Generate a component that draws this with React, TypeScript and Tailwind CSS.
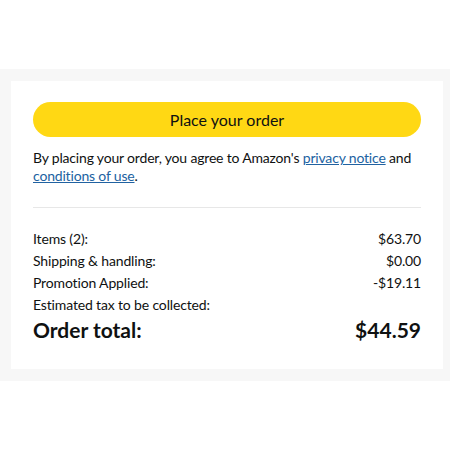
import React from "react";

export default function App() {
  const font = { fontFamily: 'Lato, "Noto Sans", Arial, sans-serif' };
  return (
    <div className="w-[450px] h-[450px] bg-white" style={font}>
      <div className="h-[69px]" />
      <div className="bg-[#f7f7f7] pl-[11px] pr-[7px] py-[12px]">
        <div className="bg-white px-[22px] pt-[21px] pb-[24px] text-[#0f1111]">
          <button className="w-full h-[35px] rounded-full bg-[#ffd814] text-[16px] text-[#0f1111] flex items-center justify-center">
            Place your order
          </button>
          <p className="mt-[12px] text-[14px] leading-[18px] tracking-[-0.18px]">
            By placing your order, you agree to Amazon's{" "}
            <a className="text-[#2162a1] underline">privacy notice</a> and{" "}
            <a className="text-[#2162a1] underline">conditions of use</a>.
          </p>
          <div className="mt-[22px] h-px bg-[#e7e7e7]" />
          <div className="mt-[19px] text-[14px] tracking-[-0.15px]">
            <div className="flex justify-between h-[22px] items-center">
              <span>Items (2):</span>
              <span>$63.70</span>
            </div>
            <div className="flex justify-between h-[22px] items-center">
              <span>Shipping &amp; handling:</span>
              <span>$0.00</span>
            </div>
            <div className="flex justify-between h-[22px] items-center">
              <span>Promotion Applied:</span>
              <span>-$19.11</span>
            </div>
            <div className="flex justify-between h-[22px] items-center">
              <span>Estimated tax to be collected:</span>
              <span></span>
            </div>
            <div className="flex justify-between h-[30px] items-center text-[21px] font-bold tracking-normal">
              <span>Order total:</span>
              <span>$44.59</span>
            </div>
          </div>
        </div>
      </div>
    </div>
  );
}
